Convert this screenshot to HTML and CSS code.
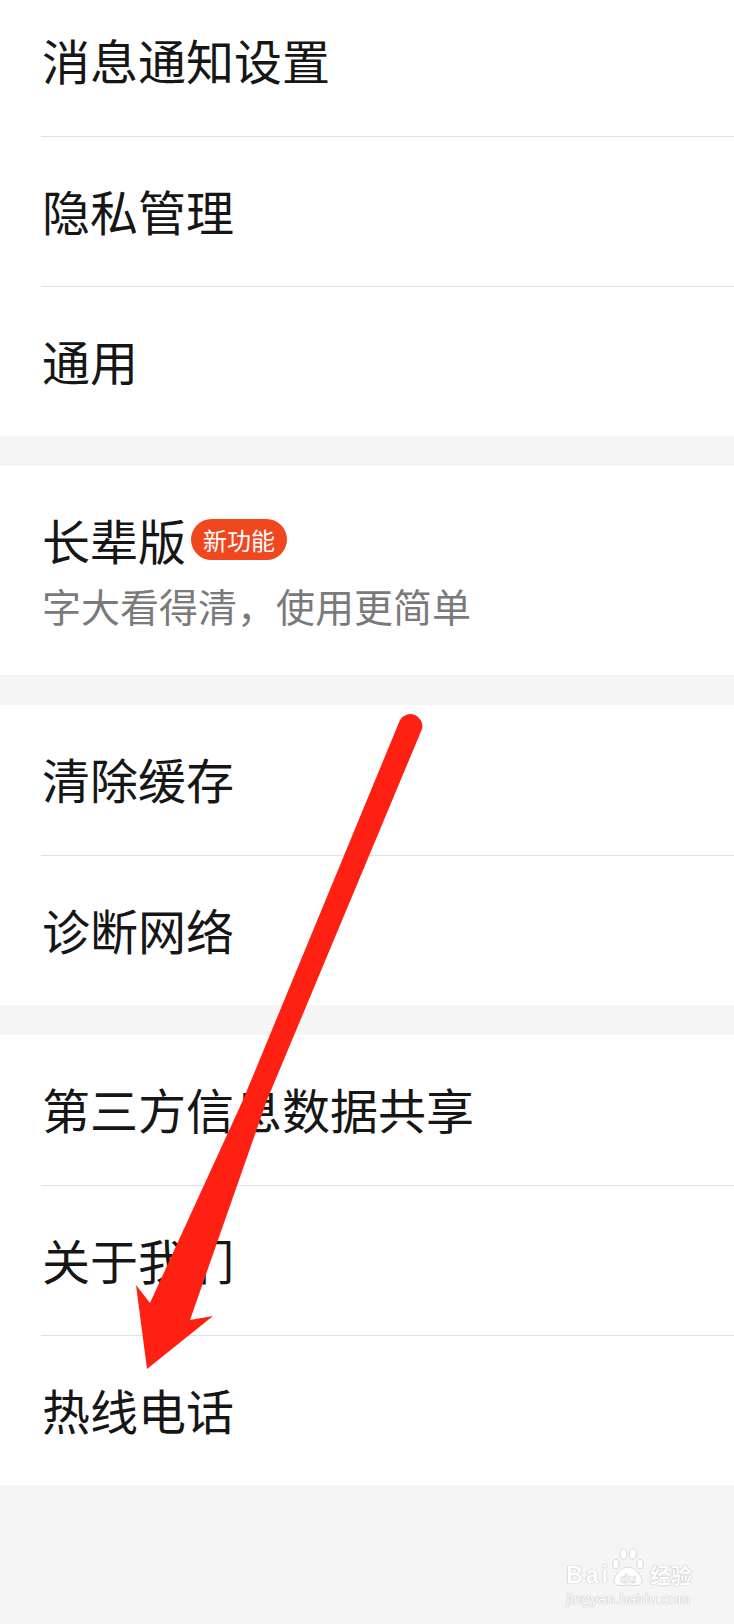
FILE: index.html
```html
<!DOCTYPE html>
<html lang="zh-CN">
  <head>
    <meta charset="UTF-8" />
    <meta name="viewport" content="width=device-width, initial-scale=1.0" />
    <title>设置</title>
    <link rel="stylesheet" href="styles.css">
  </head>
  <body>
    <div class="group group-top">
      <div class="row">消息通知设置</div>
      <div class="row">隐私管理</div>
      <div class="row">通用</div>
    </div>

    <div class="group elder">
      <div class="elder-title">
        <span>长辈版</span>
        <span class="badge">新功能</span>
      </div>
      <div class="elder-sub">字大看得清，使用更简单</div>
    </div>

    <div class="group">
      <div class="row">清除缓存</div>
      <div class="row">诊断网络</div>
    </div>

    <div class="group">
      <div class="row">第三方信息数据共享</div>
      <div class="row">关于我们</div>
      <div class="row">热线电话</div>
    </div>

    <div class="footer">
      <div class="watermark">
        <div class="wm-logo">
          <span class="wm-bai">Bai</span>
          <svg class="wm-paw" width="34" height="40" viewBox="0 0 34 40">
            <g fill="#ffffff" stroke="#d9d9d9" stroke-width="1">
              <ellipse cx="5" cy="17" rx="3.2" ry="4.6" />
              <ellipse cx="12.5" cy="7" rx="3.6" ry="5.2" />
              <ellipse cx="22" cy="7" rx="3.6" ry="5.2" />
              <ellipse cx="29" cy="17" rx="3.2" ry="4.6" />
              <path d="M17 20 C 9 20, 3 30, 3 34 C 3 39, 9 39, 17 38 C 25 39, 31 39, 31 34 C 31 30, 25 20, 17 20 Z" />
            </g>
            <text x="17" y="36" text-anchor="middle" class="wm-du">du</text>
          </svg>
          <span class="wm-jy">经验</span>
        </div>
        <div class="wm-url">jingyan.baidu.com</div>
      </div>
    </div>

    <!-- annotation arrow drawn over the list -->
    <svg class="arrow" width="734" height="1624" viewBox="0 0 734 1624">
      <path
        d="M400 720 L243 1100 L150 1303 L136 1285 L147 1369 L213 1316 L190 1320 L267 1100 L422 729 A12 12 0 0 0 400 720 Z"
        fill="#fe2013"
      />
    </svg>
  </body>
</html>
```

FILE: styles.css
```css
* {
  box-sizing: border-box;
}
body {
  margin: 0;
  position: relative;
  width: 734px;
  min-height: 1624px;
  background: #f5f5f5;
  font-family: "Noto Sans CJK SC", "Noto Sans", sans-serif;
  color: #161616;
  overflow: hidden;
}
.group {
  background: #ffffff;
  margin-bottom: 30px;
}
.group-top {
  margin-top: -14px;
}
.row {
  height: 150px;
  margin-left: 41px;
  padding-left: 1px;
  padding-bottom: 4px;
  display: flex;
  align-items: center;
  font-size: 48px;
  line-height: 60px;
}
.row + .row {
  border-top: 1px solid #e1e1e1;
}

.elder {
  padding: 43px 0 43px 42px;
}
.elder-title {
  display: flex;
  align-items: center;
  height: 60px;
  font-size: 48px;
  line-height: 60px;
}
.badge {
  margin-left: 5px;
  height: 41px;
  padding: 0 12px;
  border-radius: 21px;
  background: #f0471f;
  color: #ffffff;
  font-size: 24px;
  line-height: 41px;
}
.elder-sub {
  margin-top: 9px;
  font-size: 39px;
  line-height: 54px;
  color: #7a7a7a;
}

.footer {
  display: flex;
  justify-content: flex-end;
  padding: 30px 42px 0 0;
}
.watermark {
  display: flex;
  flex-direction: column;
  align-items: flex-start;
  color: #ffffff;
}
.wm-logo {
  display: flex;
  align-items: flex-end;
  height: 42px;
}
.wm-bai {
  font-family: "Liberation Sans", sans-serif;
  font-weight: bold;
  font-size: 23px;
  line-height: 24px;
  letter-spacing: 3px;
  text-shadow: 0 0 1px #b5b5b5, 0 0 1px #b5b5b5;
}
.wm-paw {
  display: block;
}
.wm-du {
  font-family: "Liberation Sans", sans-serif;
  font-weight: bold;
  font-size: 13px;
  fill: #ffffff;
  stroke: #cfcfcf;
  stroke-width: 0.6px;
}
.wm-jy {
  margin-left: 5px;
  font-weight: bold;
  font-size: 21px;
  line-height: 26px;
  text-shadow: 0 0 1px #b5b5b5, 0 0 1px #b5b5b5;
}
.wm-url {
  margin-top: 4px;
  font-family: "Liberation Sans", sans-serif;
  font-size: 15px;
  line-height: 16px;
  letter-spacing: 0.2px;
  text-shadow: 0 0 1px #b5b5b5, 0 0 1px #b5b5b5;
}

.arrow {
  position: absolute;
  top: 0;
  left: 0;
  pointer-events: none;
}
```
